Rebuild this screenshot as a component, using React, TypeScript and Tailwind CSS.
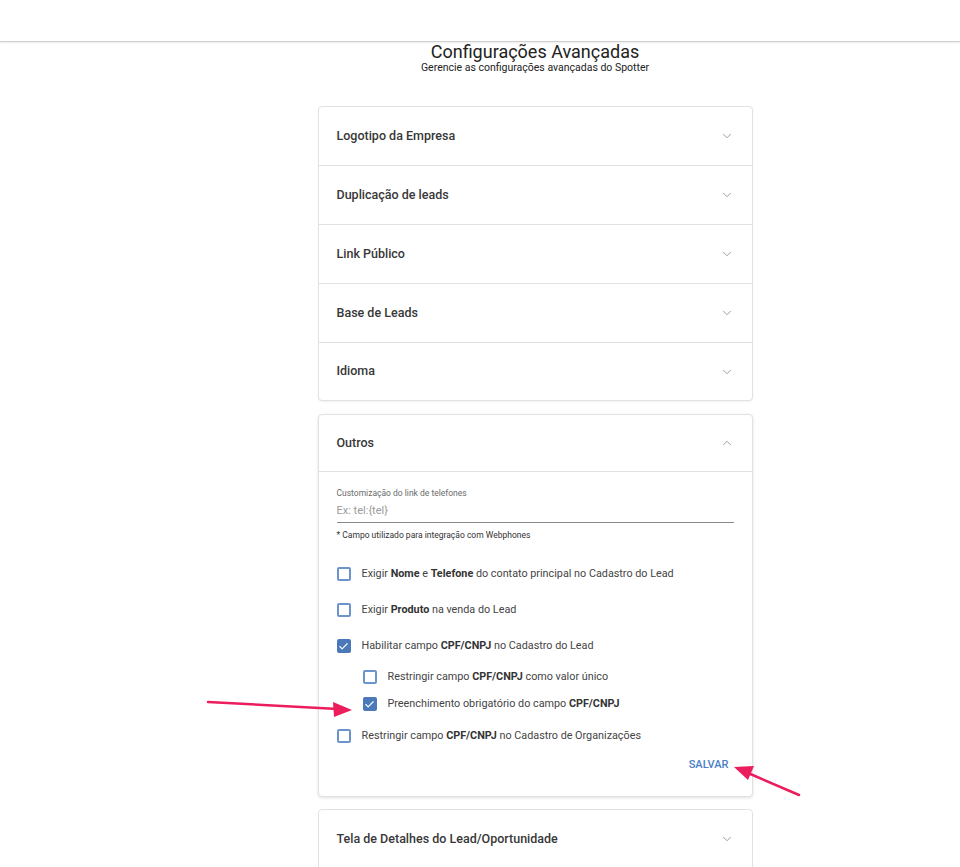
import { ChevronDown, ChevronUp, Check } from "lucide-react";

const font = { fontFamily: "Roboto, 'Liberation Sans', sans-serif" };

const panels = [
  "Logotipo da Empresa",
  "Duplicação de leads",
  "Link Público",
  "Base de Leads",
  "Idioma",
];

function Box({ checked }: { checked?: boolean }) {
  return checked ? (
    <span className="flex h-[14px] w-[14px] shrink-0 items-center justify-center rounded-[2px] bg-[#4a78b8]">
      <Check size={11} strokeWidth={2.5} className="text-white" />
    </span>
  ) : (
    <span className="h-[14px] w-[14px] shrink-0 rounded-[2px] border-2 border-[#6d95cc]" />
  );
}

function Row({
  checked,
  indent,
  children,
  className = "",
}: {
  checked?: boolean;
  indent?: boolean;
  children: React.ReactNode;
  className?: string;
}) {
  return (
    <div className={`flex h-[16px] items-center gap-[11px] ${indent ? "pl-[26px]" : ""} ${className}`}>
      <Box checked={checked} />
      <span className="text-[10.8px] text-[#444]">{children}</span>
    </div>
  );
}

export default function App() {
  return (
    <div className="relative min-h-[867px] bg-white" style={font}>
      {/* topo */}
      <div className="h-[42px] border-b border-[#cfcfcf] shadow-[0_1px_2px_rgba(0,0,0,0.08)]" />

      <div className="flex flex-col items-center pl-[110px]">
        {/* título */}
        <div className="text-center">
          <h1 className="text-[18px] leading-[18px] pt-[1px] text-[#222]">Configurações Avançadas</h1>
          <p className="text-[10.5px] leading-[14px] text-[#222]">
            Gerencie as configurações avançadas do Spotter
          </p>
        </div>

        <div className="mt-[31px] w-[435px]">
          {/* painéis */}
          <div className="rounded-[4px] border border-[#e2e2e2] bg-white shadow-[0_1px_2px_rgba(0,0,0,0.06)]">
            {panels.map((p, i) => (
              <div
                key={p}
                className={`flex items-center justify-between px-[18px] ${
                  i === 0 ? "h-[58px]" : i === panels.length - 1 ? "h-[58px] border-t border-[#e2e2e2]" : "h-[59px] border-t border-[#e2e2e2]"
                }`}
              >
                <span className="text-[12.5px] font-medium text-[#383838]">{p}</span>
                <ChevronDown size={14} strokeWidth={1.5} className="text-[#8f8f8f]" />
              </div>
            ))}
          </div>

          {/* Outros */}
          <div className="mt-[13px] rounded-[4px] border border-[#e2e2e2] bg-white shadow-[0_1px_3px_rgba(0,0,0,0.12)]">
            <div className="flex h-[57px] items-center justify-between border-b border-[#e2e2e2] px-[18px]">
              <span className="text-[12.5px] font-medium text-[#383838]">Outros</span>
              <ChevronUp size={14} strokeWidth={1.5} className="text-[#8f8f8f]" />
            </div>
            <div className="px-[18px] pt-[15px] pb-[23px]">
              <div className="text-[8.5px] text-[#6b6b6b]">Customização do link de telefones</div>
              <div className="mt-[3px] border-b border-[#8a8a8a] pb-[3px] text-[11px] text-[#9b9b9b]">
                Ex: tel:{"{tel}"}
              </div>
              <div className="mt-[6px] text-[8.5px] text-[#333]">* Campo utilizado para integração com Webphones</div>

              <div className="mt-[24px]">
                <Row>
                  Exigir <b className="font-bold text-[#333]">Nome</b> e <b className="font-bold text-[#333]">Telefone</b> do contato principal no Cadastro do Lead
                </Row>
                <Row className="mt-[20px]">
                  Exigir <b className="font-bold text-[#333]">Produto</b> na venda do Lead
                </Row>
                <Row checked className="mt-[20px]">
                  Habilitar campo <b className="font-bold text-[#333]">CPF/CNPJ</b> no Cadastro do Lead
                </Row>
                <Row indent className="mt-[15px]">
                  Restringir campo <b className="font-bold text-[#333]">CPF/CNPJ</b> como valor único
                </Row>
                <Row indent checked className="mt-[11px]">
                  Preenchimento obrigatório do campo <b className="font-bold text-[#333]">CPF/CNPJ</b>
                </Row>
                <Row className="mt-[16px]">
                  Restringir campo <b className="font-bold text-[#333]">CPF/CNPJ</b> no Cadastro de Organizações
                </Row>
              </div>

              <div className="mt-[13px] flex justify-end pr-[5px]">
                <button className="text-[11px] leading-[16px] font-medium text-[#4a7ec6]">SALVAR</button>
              </div>
            </div>
          </div>

          {/* Tela de Detalhes */}
          <div className="mt-[12px] rounded-t-[4px] border border-[#e2e2e2] bg-white">
            <div className="flex h-[58px] items-center justify-between px-[18px]">
              <span className="text-[12.5px] font-medium text-[#383838]">Tela de Detalhes do Lead/Oportunidade</span>
              <ChevronDown size={14} strokeWidth={1.5} className="text-[#8f8f8f]" />
            </div>
          </div>
        </div>
      </div>

      {/* setas de destaque */}
      <svg className="pointer-events-none absolute left-0 top-0" width="960" height="867">
        <line x1="208" y1="702" x2="338" y2="709" stroke="#ec1d5c" strokeWidth="2.5" strokeLinecap="round" />
        <polygon points="352,710 333,702 334,717" fill="#ec1d5c" />
        <line x1="799" y1="795" x2="748" y2="773" stroke="#ec1d5c" strokeWidth="2.5" strokeLinecap="round" />
        <polygon points="734,767 754,766 748,780" fill="#ec1d5c" />
      </svg>
    </div>
  );
}
